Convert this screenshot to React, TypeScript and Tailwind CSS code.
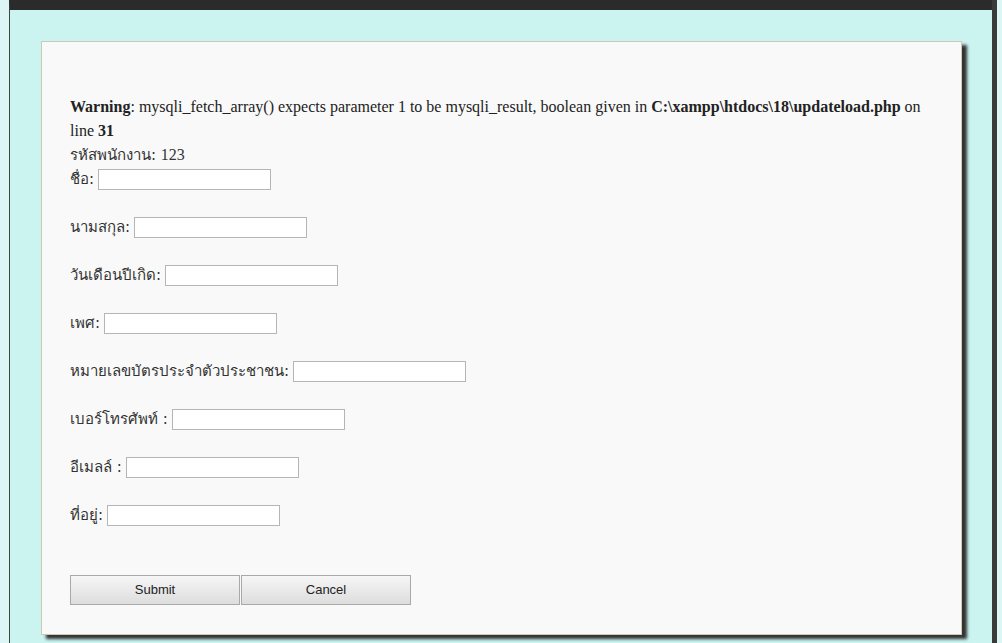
import type { ReactNode } from 'react'

const serif = { fontFamily: '"Liberation Serif", "Times New Roman", serif' }
const thai = { fontFamily: 'Tahoma, "DejaVu Sans", "Noto Sans", sans-serif' }

/* One label + text box; rows sit 48px apart like the old <br><br> layout. */
function Field({ label }: { label: ReactNode }) {
  return (
    <div className="flex h-[21px] items-center">
      <span className="text-[15px] text-[#333]" style={thai}>
        {label}
      </span>
      <input
        type="text"
        className="ml-[4px] h-[21px] w-[173px] border border-[#b5b5b5] bg-white outline-none"
      />
    </div>
  )
}

function Btn({ children }: { children: ReactNode }) {
  return (
    <button
      type="button"
      className="h-[30px] w-[170px] border border-[#a9a9a9] bg-gradient-to-b from-[#f6f6f6] to-[#dddddd] text-[13px] text-[#222]"
      style={{ fontFamily: '"Liberation Sans", Arial, sans-serif' }}
    >
      {children}
    </button>
  )
}

export default function App() {
  return (
    <div className="flex h-[643px] w-[1002px] overflow-hidden bg-[#dcf6f6]">
      <div className="ml-[9px] h-full w-[983px] border-l border-t-[10px] border-l-[#444] border-t-[#2b2b2b] bg-[#cbf4f1] shadow-[5px_0_0_#3a3a3a]">
        <div className="ml-[31px] mt-[31px] h-[594px] w-[921px] border border-[#cfc8b4] bg-[#f9f9f9] px-[28px] pt-[53px] shadow-[5px_4px_3px_#333]">
          <div className="text-[16px] leading-[24px] text-[#222]" style={serif}>
            <b>Warning</b>: mysqli_fetch_array() expects parameter 1 to be mysqli_result, boolean given in{' '}
            <b>C:\xampp\htdocs\18\updateload.php</b> on line <b>31</b>
          </div>
          <div className="h-[24px] text-[15px] leading-[24px] text-[#333]" style={thai}>
            รหัสพนักงาน: <span style={serif} className="text-[16px]">123</span>
          </div>

          <div className="mt-[2px] flex flex-col gap-[27px]">
            <Field label="ชื่อ:" />
            <Field label="นามสกุล:" />
            <Field label="วันเดือนปีเกิด:" />
            <Field label="เพศ:" />
            <Field label="หมายเลขบัตรประจำตัวประชาชน:" />
            <Field label="เบอร์โทรศัพท์ :" />
            <Field label="อีเมลล์ :" />
            <Field label="ที่อยู่:" />
          </div>

          <div className="mt-[49px] flex gap-[1px]">
            <Btn>Submit</Btn>
            <Btn>Cancel</Btn>
          </div>
        </div>
      </div>
    </div>
  )
}
